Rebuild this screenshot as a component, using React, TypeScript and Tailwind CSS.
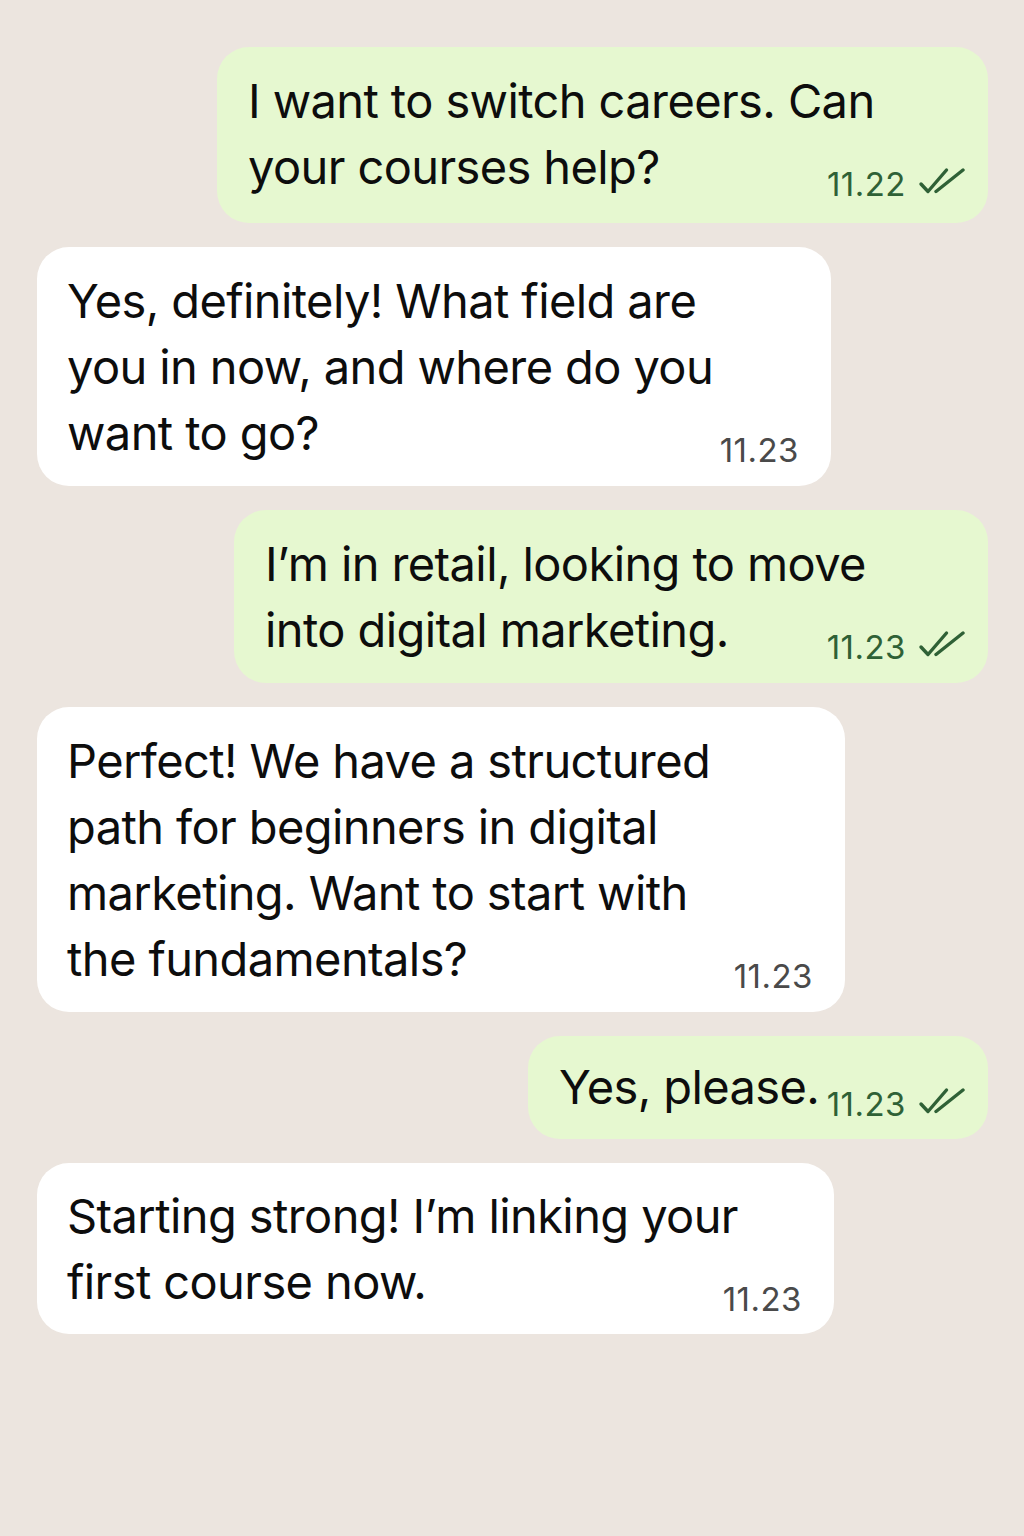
import React from 'react';

type Msg = {
  out: boolean;
  lines: string[];
  time: string;
  width: string;
  pad: string;
};

const messages: Msg[] = [
  { out: true, lines: ['I want to switch careers. Can', 'your courses help?'], time: '11.22', width: 'w-[771px]', pad: 'pt-[21px] pb-[23px]' },
  {
    out: false,
    lines: ['Yes, definitely! What field are', 'you in now, and where do you', 'want to go?'],
    time: '11.23',
    width: 'w-[794px]',
    pad: 'pt-[21px] pb-[20px]',
  },
  { out: true, lines: ['I’m in retail, looking to move', 'into digital marketing.'], time: '11.23', width: 'w-[754px]', pad: 'pt-[21px] pb-[20px]' },
  {
    out: false,
    lines: ['Perfect! We have a structured', 'path for beginners in digital', 'marketing. Want to start with', 'the fundamentals?'],
    time: '11.23',
    width: 'w-[808px]',
    pad: 'pt-[21px] pb-[20px]',
  },
  { out: true, lines: ['Yes, please.'], time: '11.23', width: 'w-[460px]', pad: 'pt-[18px] pb-[19px]' },
  {
    out: false,
    lines: ['Starting strong! I’m linking your', 'first course now.'],
    time: '11.23',
    width: 'w-[797px]',
    pad: 'pt-[20px] pb-[19px]',
  },
];

function Ticks() {
  return (
    <svg width="47" height="28" viewBox="0 0 47 28" fill="none" className="ml-3 mb-[5px] shrink-0">
      <path d="M3 17 L10 24.5 L28.5 3" stroke="#2f6136" strokeWidth="3.4" strokeLinecap="round" strokeLinejoin="round" />
      <path d="M18 24.5 L45 3" stroke="#2f6136" strokeWidth="3.4" strokeLinecap="round" />
    </svg>
  );
}

function Bubble({ m }: { m: Msg }) {
  return (
    <div
      className={`${m.width} ${m.pad} flex items-end justify-between rounded-[32px] ${
        m.out ? 'self-end bg-[#e6f8d0] pl-[31px] pr-[23px]' : 'self-start bg-white pl-[30px] pr-[32px]'
      }`}
    >
      <p className="min-w-0 text-[47px] leading-[66px] tracking-[-0.6px] text-[#0d0d0d]">
        {m.lines.map((l, i) => (
          <span key={i} className="block whitespace-nowrap">
            {l}
          </span>
        ))}
      </p>
      <div className="flex items-end shrink-0">
        <span className={`text-[33px] leading-[32px] tracking-[0.5px] ${m.out ? 'text-[#2f6136]' : 'text-[#4a4a4a]'}`}>{m.time}</span>
        {m.out && <Ticks />}
      </div>
    </div>
  );
}

export default function App() {
  return (
    <div
      className="min-h-[1536px] w-[1024px] bg-[#ece5df] pt-[47px] pl-[37px] pr-[36px]"
      style={{ fontFamily: 'Inter, "Noto Sans", sans-serif' }}
    >
      <div className="flex flex-col gap-[24px]">
        {messages.map((m, i) => (
          <Bubble key={i} m={m} />
        ))}
      </div>
    </div>
  );
}
